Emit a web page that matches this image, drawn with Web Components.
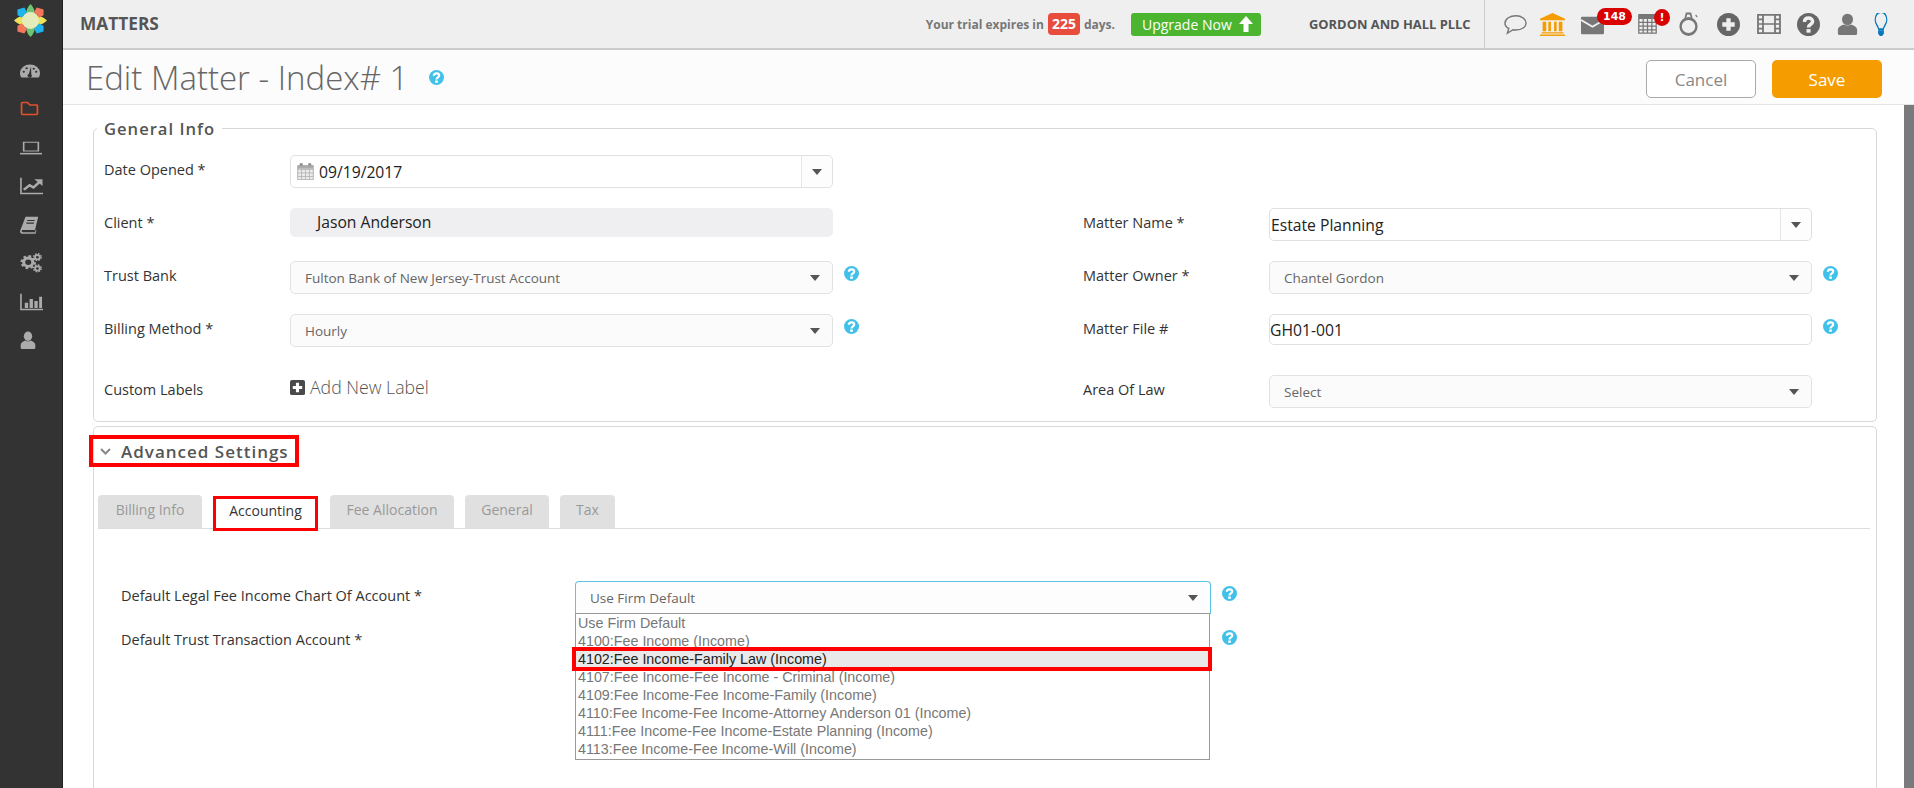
<!DOCTYPE html>
<html lang="en">
<head>
<meta charset="utf-8">
<title>Edit Matter</title>
<style>
  html, body { margin: 0; height: 100%; overflow: hidden; background: #fff; font-family: "Open Sans", "Liberation Sans", sans-serif; }
</style>
</head>
<body>
<app-shell>
  <side-nav slot="nav"></side-nav>
  <top-bar slot="top"></top-bar>
  <page-header slot="head" heading="Edit Matter - Index# 1"></page-header>
  <general-info slot="main"></general-info>
  <advanced-settings slot="main"></advanced-settings>
</app-shell>

<script>
// dibujos de los iconos, todos en una caja de 24x24
const ICONS = {
  gauge: `<path fill="currentColor" d="M12 2A12 12 0 0 0 0 14c0 2.400.6 4.400 1.600 6.500h20.800c1-2.100 1.600-4.100 1.600-6.500A12 12 0 0 0 12 2z"/><g fill="#333"><circle cx="4.500" cy="12.500" r="1.400"/><circle cx="8" cy="7.500" r="1.400"/><circle cx="16.500" cy="8" r="1.400"/><circle cx="19.500" cy="12.500" r="1.400"/><path d="M13.200 5l-2.600 10.500a2.600 2.600 0 1 0 3 .6z"/></g>`,
  folder: `<path fill="none" stroke="currentColor" stroke-width="2.200" stroke-linejoin="round" d="M2 4.500a1 1 0 0 1 1-1h6.500l3 3.500H21a1 1 0 0 1 1 1v11.500a1 1 0 0 1-1 1H3a1 1 0 0 1-1-1z"/>`,
  laptop: `<path fill="none" stroke="currentColor" stroke-width="1.800" d="M4 2h16v14H4z"/><path fill="currentColor" d="M0 19h24v2.500H0z"/>`,
  chart: `<path fill="none" stroke="currentColor" stroke-width="1.700" d="M1 1v21h23"/><path fill="none" stroke="currentColor" stroke-width="3" d="M4 17l6-6 4 3 7-8"/><path fill="currentColor" d="M15 3h8.500v9z"/>`,
  book: `<path fill="currentColor" d="M7 1h16l-4 17.500H3.500a1.500 1.500 0 0 0 0 3H19l.8-3 1 .2-1.200 4.800H3A3 3 0 0 1 .2 19.500z"/><path fill="none" stroke="#333" stroke-width="1.500" d="M9 6h9.500M8 9.500h9.500"/>`,
  gears: `<g fill="none" stroke="currentColor"><circle cx="9" cy="11" r="5" stroke-width="3.400"/><circle cx="9" cy="11" r="7.200" stroke-width="2.600" stroke-dasharray="3 2.650"/><circle cx="19" cy="5" r="2.500" stroke-width="1.900"/><circle cx="19" cy="5" r="4" stroke-width="1.800" stroke-dasharray="1.800 1.350"/><circle cx="19" cy="18.500" r="2.500" stroke-width="1.900"/><circle cx="19" cy="18.500" r="4" stroke-width="1.800" stroke-dasharray="1.800 1.350"/></g>`,
  bars: `<path fill="none" stroke="currentColor" stroke-width="1.700" d="M1 1v21h23"/><path fill="currentColor" d="M5 13h3.500v7H5zM10 8h3.500v12H10zM15 10.500h3.500V20H15zM20 5h3v15h-3z"/>`,
  user: `<circle fill="currentColor" cx="12" cy="7" r="6.300"/><path fill="currentColor" d="M1 22v-3.500c0-3 3.500-5 7-6 2.500 1.500 5.500 1.500 8 0 3.500 1 7 3 7 6V22a2 2 0 0 1-2 2H3a2 2 0 0 1-2-2z"/>`,
  chat: `<path fill="none" stroke="currentColor" stroke-width="1.500" d="M12.500 2C6.500 2 1 5.500 1 10.500c0 2.700 1.700 4.700 4 6l-1.500 5.500 6-4c1 .2 2 .3 3 .3 6 0 10.500-3.500 10.500-7.800S18.500 2 12.500 2z"/>`,
  bank: `<path fill="currentColor" d="M12 0l12 6v1.500H0V6zM2.500 9h3.500v10H2.500zM8 9h2.500v10H8zM13.500 9H16v10h-2.500zM18 9h3.500v10H18zM1.500 20h21v1.500h-21zM0 22.500h24V24H0z"/>`,
  mail: `<path fill="currentColor" d="M1 2h22a1 1 0 0 1 1 1v19a1 1 0 0 1-1 1H1a1 1 0 0 1-1-1V3a1 1 0 0 1 1-1z"/><path fill="none" stroke="#efefef" stroke-width="2.200" d="M0 6l12 8L24 6"/>`,
  calc: `<path fill="currentColor" d="M1 0h22v6H1z"/><path fill="none" stroke="currentColor" stroke-width="1.600" d="M1 1h22v22H1zM1 10h22M1 14.500h22M1 19h22M6.500 6v17M12 6v17M17.500 6v17"/>`,
  ring: `<ellipse fill="none" stroke="currentColor" stroke-width="3" cx="12" cy="14.500" rx="10" ry="8"/><path fill="none" stroke="currentColor" stroke-width="2.200" d="M8 6L9.500 1.500h5L16 6"/><path fill="none" stroke="currentColor" stroke-width="1.500" d="M21 3l2 2"/>`,
  plus: `<circle fill="currentColor" cx="12" cy="12" r="12"/><path fill="none" stroke="#efefef" stroke-width="4.500" d="M12 5.500v13M5.500 12h13"/>`,
  film: `<path fill="none" stroke="currentColor" stroke-width="1.800" d="M1 2h22v20H1zM6 2v20M18 2v20M1 7h5M1 12h5M1 17h5M18 7h5M18 12h5M18 17h5M6 12h12"/>`,
  help: `<circle fill="currentColor" cx="12" cy="12" r="12"/><path fill="none" stroke="#efefef" stroke-width="3.600" d="M7.800 9.300c0-2.600 1.900-4 4.300-4s4.200 1.400 4.200 3.600c0 3-4.300 2.800-4.300 6.200"/><path fill="#efefef" d="M9.900 16.800h4.300v3.700H9.900z"/>`,
  tip: `<circle fill="currentColor" cx="12" cy="12" r="12"/><path fill="none" stroke="#fff" stroke-width="3.600" d="M7.800 9.300c0-2.600 1.900-4 4.300-4s4.200 1.400 4.200 3.600c0 3-4.300 2.800-4.300 6.200"/><path fill="#fff" d="M9.900 16.800h4.300v3.700H9.900z"/>`,
  bulb: `<path fill="none" stroke="currentColor" stroke-width="2" d="M8 17c0-3-6-5-6-10a10 8 0 0 1 20 0c0 5-6 7-6 10z"/><path fill="currentColor" d="M7 18h10v3.500l-3 2.500h-4l-3-2.500z"/>`,
  date: `<path fill="#ececec" stroke="#9a9a9a" stroke-width="1" d="M1 3.500h22v20H1z"/><path fill="none" stroke="#a8a8a8" stroke-width="1" d="M1 9h22M1 14h22M1 19h22M6.500 9v14.500M12 9v14.500M17.500 9v14.500"/><path fill="#888" d="M4 .5h4v5H4zM16 .5h4v5h-4z"/><path fill="#aaa" d="M1 3.500h22V8H1z"/>`,
  addbox: `<rect fill="currentColor" width="24" height="24" rx="3"/><path fill="none" stroke="#fff" stroke-width="5" d="M12 4.500v15M4.500 12h15"/>`,
  logo: `<g transform="translate(12 12)">
    <path fill="#6fc46f" d="M0-12Q3.600-8.500 3-4H-3Q-3.600-8.500 0-12zM0 12Q3.600 8.500 3 4H-3Q-3.600 8.500 0 12z"/>
    <path fill="#efe25a" d="M-12 0Q-8.500-3.600-4-3V3Q-8.500 3.600-12 0zM12 0Q8.500-3.600 4-3V3Q8.500 3.600 12 0z"/>
    <path fill="#f4775a" d="M4.500-9.500l5 1.500 0 4-3 2-4-4zM-4.500 9.500l-5-1.500 0-4 3-2 4 4z"/>
    <path fill="#1fb4ee" d="M-4.500-9.500l-5 1.500 0 4 3 2 4-4zM4.500 9.500l5-1.500 0-4-3-2-4 4z"/>
    <circle r="6.200" fill="#e4ecbc"/></g>`
};

class UiIcon extends HTMLElement {
  constructor() {
    super();
    this.attachShadow({mode: "open"});
  }
  connectedCallback() {
    const w = this.getAttribute("w") || 20;
    const h = this.getAttribute("h") || w;
    this.shadowRoot.innerHTML = `
      <style>
        :host { display: inline-block; line-height: 0; flex: none; }
        svg { display: block; }
      </style>
      <svg width="${w}" height="${h}" viewBox="0 0 24 24" preserveAspectRatio="none">${ICONS[this.getAttribute("name")]}</svg>`;
  }
}
customElements.define("ui-icon", UiIcon);

// el signo de ayuda celeste que sale junto a los campos
class HelpTip extends HTMLElement {
  constructor() {
    super();
    this.attachShadow({mode: "open"});
    this.shadowRoot.innerHTML = `
      <style>
        :host { display: inline-block; line-height: 0; color: #41c1e9; flex: none; }
      </style>
      <ui-icon name="tip" w="15" h="15"></ui-icon>`;
  }
}
customElements.define("help-tip", HelpTip);

class AppShell extends HTMLElement {
  constructor() {
    super();
    this.attachShadow({mode: "open"});
    this.shadowRoot.innerHTML = `
      <style>
        :host { display: flex; height: 788px; overflow: hidden; }
        .col { flex: 1; min-width: 0; display: flex; flex-direction: column; }
        .body { flex: 1; min-height: 0; display: flex; }
        .scroll { flex: 1; min-width: 0; overflow: hidden; padding: 12px 27px 0 30px; }
        .thumb { width: 10px; background: #7a7a7c; }
      </style>
      <slot name="nav"></slot>
      <div class="col">
        <slot name="top"></slot>
        <slot name="head"></slot>
        <div class="body">
          <div class="scroll"><slot name="main"></slot></div>
          <div class="thumb"></div>
        </div>
      </div>`;
  }
}
customElements.define("app-shell", AppShell);

class SideNav extends HTMLElement {
  constructor() {
    super();
    this.attachShadow({mode: "open"});
    this.shadowRoot.innerHTML = `
      <style>
        :host { display: flex; flex-direction: column; width: 63px; flex: none; background: #333; border-right: 1px solid #222; box-sizing: border-box; color: #ababab; padding: 4px 0 0 20px; }
        .logo { margin: 0 0 26px -6px; }
        ui-icon { display: block; }
        .on { color: #e2502a; }
      </style>
      <ui-icon class="logo" name="logo" w="33"></ui-icon>
      <ui-icon name="gauge" w="20" h="17"></ui-icon>
      <ui-icon class="on" name="folder" w="19" h="17" style="margin-top:20px"></ui-icon>
      <ui-icon name="laptop" w="22" h="15" style="margin-top:24px"></ui-icon>
      <ui-icon name="chart" w="23" h="18" style="margin-top:21px"></ui-icon>
      <ui-icon name="book" w="19" h="18" style="margin-top:21px"></ui-icon>
      <ui-icon name="gears" w="22" h="20" style="margin-top:19px"></ui-icon>
      <ui-icon name="bars" w="23" h="18" style="margin-top:20px"></ui-icon>
      <ui-icon name="user" w="16" h="18" style="margin-top:20px"></ui-icon>`;
  }
}
customElements.define("side-nav", SideNav);

class TopBar extends HTMLElement {
  constructor() {
    super();
    this.attachShadow({mode: "open"});
    this.shadowRoot.innerHTML = `
      <style>
        :host { display: flex; align-items: center; height: 50px; flex: none; box-sizing: border-box; background: #efefef; border-bottom: 2px solid #ccc; padding-left: 17px; color: #666; }
        .name { font-size: 17.300px; font-weight: 700; color: #555; margin-right: auto; margin-top: -1px; }
        .trial { display: flex; align-items: center; font-size: 12px; font-weight: 700; color: #777; }
        .days { background: #e74c3c; color: #fff; font-weight: 700; font-size: 14px; border-radius: 4px; padding: 0 4px; height: 22px; line-height: 22px; margin: 0 4px; }
        .up { display: flex; align-items: center; justify-content: space-between; box-sizing: border-box; width: 130px; height: 23px; margin-left: 16px; padding: 0 8px 0 11px; background: #4cb530; color: #fff; font-size: 14px; border-radius: 3px; }
        .firm { font-size: 12.900px; font-weight: 700; color: #555; margin-left: 48px; width: 175px; white-space: nowrap; }
        .icons { display: flex; align-items: center; height: 48px; border-left: 1px solid #ccc; box-sizing: border-box; width: 430px; padding-left: 19px; }
        .badged { position: relative; display: block; }
        .badge { position: absolute; background: #d90000; color: #fff; font-family: "DejaVu Sans", sans-serif; font-weight: 700; font-size: 11px; line-height: 17px; height: 17px; text-align: center; }
        .count { left: 16px; top: -7px; width: 35px; border-radius: 9px; }
        .alert { left: 16px; top: -5px; width: 16px; border-radius: 50%; }
      </style>
      <div class="name">MATTERS</div>
      <div class="trial">Your trial expires in <span class="days">225</span> days.</div>
      <div class="up">Upgrade Now
        <svg width="14" height="16" viewBox="0 0 14 16"><path fill="#fff" d="M7 0l7 8H9.500v8h-5V8H0z"/></svg>
      </div>
      <div class="firm">GORDON AND HALL PLLC</div>
      <div class="icons">
        <ui-icon name="chat" w="23" h="21" style="color:#777"></ui-icon>
        <ui-icon name="bank" w="25" h="23" style="color:#f59d00;margin-left:13px"></ui-icon>
        <span class="badged" style="margin-left:16px;margin-top:1px">
          <ui-icon name="mail" w="23" h="20" style="color:#777;display:block"></ui-icon>
          <span class="badge count">148</span>
        </span>
        <span class="badged" style="margin-left:34px">
          <ui-icon name="calc" w="19" h="20" style="color:#777;display:block"></ui-icon>
          <span class="badge alert">!</span>
        </span>
        <ui-icon name="ring" w="19" h="24" style="color:#777;margin-left:22px"></ui-icon>
        <ui-icon name="plus" w="23" h="23" style="color:#666;margin-left:19px"></ui-icon>
        <ui-icon name="film" w="24" h="22" style="color:#777;margin-left:17px"></ui-icon>
        <ui-icon name="help" w="23" h="23" style="color:#666;margin-left:16px"></ui-icon>
        <ui-icon name="user" w="21" h="22" style="color:#777;margin-left:17px"></ui-icon>
        <ui-icon name="bulb" w="14" h="23" style="color:#0a78bf;margin-left:16px"></ui-icon>
      </div>`;
  }
}
customElements.define("top-bar", TopBar);

class PageHeader extends HTMLElement {
  constructor() {
    super();
    this.attachShadow({mode: "open"});
  }
  connectedCallback() {
    this.shadowRoot.innerHTML = `
      <style>
        :host { display: flex; align-items: center; height: 55px; flex: none; box-sizing: border-box; background: #fcfcfc; border-bottom: 1px solid #e4e4e4; padding: 4px 32px 0 23px; }
        h1 { margin: -3px 0 0; font-size: 33px; font-weight: 300; color: #666; }
        help-tip { margin: -3px auto 0 21px; }
        button { width: 110px; height: 38px; border-radius: 5px; font: 400 17px "Open Sans", sans-serif; box-sizing: border-box; }
        .cancel { background: #fff; border: 1px solid #aaa; color: #888; }
        .save { background: #f59d00; border: 0; color: #fff; margin-left: 16px; }
      </style>
      <h1>${this.getAttribute("heading")}</h1>
      <help-tip></help-tip>
      <button class="cancel">Cancel</button>
      <button class="save">Save</button>`;
  }
}
customElements.define("page-header", PageHeader);

// etiqueta + control + ayuda, una fila del formulario
class FormField extends HTMLElement {
  constructor() {
    super();
    this.attachShadow({mode: "open"});
  }
  connectedCallback() {
    const tip = this.hasAttribute("help") ? "<help-tip></help-tip>" : "";
    this.shadowRoot.innerHTML = `
      <style>
        :host { display: grid; grid-template-columns: var(--label-w, 186px) var(--control-w, 543px) auto; align-items: start; }
        label { font-size: 14.500px; line-height: 20px; padding-top: 5px; color: #333; }
        help-tip { margin: 5px 0 0 11px; }
      </style>
      <label>${this.getAttribute("label")}</label>
      <div><slot></slot></div>
      ${tip}`;
  }
}
customElements.define("form-field", FormField);

class SelectBox extends HTMLElement {
  constructor() {
    super();
    this.attachShadow({mode: "open"});
    this.shadowRoot.innerHTML = `
      <style>
        :host { display: flex; align-items: center; justify-content: space-between; box-sizing: border-box; height: 33px; background: #fbfbfb; border: 1px solid #e2e2e2; border-radius: 5px; padding: 1px 12px 0 14px; font-size: 13.500px; color: #666; }
        i { width: 0; height: 0; border: 5px solid transparent; border-top: 6px solid #555; border-bottom: 0; margin-top: -1px; }
      </style>
      <span><slot></slot></span><i></i>`;
  }
}
customElements.define("select-box", SelectBox);

// cajas con desplegable aparte (fecha, nombre del asunto) y el campo simple
class ComboBox extends HTMLElement {
  constructor() {
    super();
    this.attachShadow({mode: "open"});
    this.shadowRoot.innerHTML = `
      <style>
        :host { display: flex; align-items: stretch; box-sizing: border-box; height: 33px; background: #fff; border: 1px solid #e0e0e0; border-radius: 5px; font-size: 15.700px; color: #222; }
        .val { flex: 1; display: flex; align-items: center; gap: 5px; padding-left: var(--pad, 1px); }
        .btn { width: 30px; border-left: 1px solid #e6e6e6; display: flex; align-items: center; justify-content: center; background: #fdfdfd; border-radius: 0 5px 5px 0; }
        i { width: 0; height: 0; border: 5px solid transparent; border-top: 6px solid #555; border-bottom: 0; }
      </style>
      <div class="val"><slot></slot></div><div class="btn"><i></i></div>`;
  }
}
customElements.define("combo-box", ComboBox);

class GeneralInfo extends HTMLElement {
  constructor() {
    super();
    this.attachShadow({mode: "open"});
    this.shadowRoot.innerHTML = `
      <style>
        :host { display: block; }
        fieldset { margin: 0; padding: 15px 0 21px 10px; border: 1px solid #d8d8d8; border-radius: 5px; }
        legend { margin-left: -7px; padding: 0 7px; font-size: 16.600px; font-weight: 600; letter-spacing: 1px; color: #555; }
        .grid { display: grid; grid-template-columns: 979px 1fr; grid-auto-rows: 33px; row-gap: 20px; }
        .last { margin-top: 8px; }
        .client { box-sizing: border-box; height: 29px; background: #efeff1; border-radius: 5px; padding-left: 27px; font-size: 15.700px; line-height: 29px; color: #222; }
        .text { box-sizing: border-box; height: 31px; background: #fff; border: 1px solid #e0e0e0; border-radius: 5px; font-size: 15.700px; line-height: 31px; color: #222; }
        .add { display: flex; align-items: center; gap: 5px; font-size: 17.700px; font-weight: 300; color: #555; height: 24px; }
        .add ui-icon { color: #4a4a4a; }
        .date { --pad: 6px; }
      </style>
      <fieldset>
        <legend>General Info</legend>
        <div class="grid">
          <form-field label="Date Opened *">
            <combo-box class="date"><ui-icon name="date" w="17" h="17"></ui-icon>09/19/2017</combo-box>
          </form-field>
          <div></div>
          <form-field label="Client *"><div class="client">Jason Anderson</div></form-field>
          <form-field label="Matter Name *"><combo-box>Estate Planning</combo-box></form-field>
          <form-field label="Trust Bank" help><select-box>Fulton Bank of New Jersey-Trust Account</select-box></form-field>
          <form-field label="Matter Owner *" help><select-box>Chantel Gordon</select-box></form-field>
          <form-field label="Billing Method *" help><select-box>Hourly</select-box></form-field>
          <form-field label="Matter File #" help><div class="text">GH01-001</div></form-field>
          <form-field class="last" label="Custom Labels"><div class="add"><ui-icon name="addbox" w="15" h="15"></ui-icon>Add New Label</div></form-field>
          <form-field class="last" label="Area Of Law"><select-box>Select</select-box></form-field>
        </div>
      </fieldset>`;
  }
}
customElements.define("general-info", GeneralInfo);

class TabStrip extends HTMLElement {
  constructor() {
    super();
    this.attachShadow({mode: "open"});
    this.shadowRoot.innerHTML = `
      <style>
        :host { display: flex; margin: 28px 6px 0 4px; border-bottom: 1px solid #ddd; height: 34px; box-sizing: border-box; font-size: 14px; }
        div { box-sizing: border-box; height: 33px; background: #e0e0e0; color: #999; border-radius: 4px 4px 0 0; line-height: 29px; text-align: center; margin-right: 11px; }
        .on { width: 105px; height: 35px; margin: 1px 12px 0 0; background: #fff; color: #333; border: 3px solid #f00; border-radius: 0; line-height: 24px; }
      </style>
      <div style="width:104px">Billing Info</div>
      <div class="on">Accounting</div>
      <div style="width:124px">Fee Allocation</div>
      <div style="width:84px">General</div>
      <div style="width:55px">Tax</div>`;
  }
}
customElements.define("tab-strip", TabStrip);

// lista abierta sobre el formulario, va encima de la segunda fila
class AccountPicker extends HTMLElement {
  constructor() {
    super();
    this.attachShadow({mode: "open"});
    this.shadowRoot.innerHTML = `
      <style>
        :host { display: block; position: relative; }
        .box { display: flex; align-items: center; justify-content: space-between; box-sizing: border-box; height: 33px; background: #fdfdfd; border: 1px solid #5ec4e4; border-bottom-color: #999; border-radius: 4px 4px 0 0; padding: 0 12px 0 14px; font-size: 13.500px; color: #666; }
        i { width: 0; height: 0; border: 5px solid transparent; border-top: 6px solid #555; border-bottom: 0; }
        ul { position: absolute; left: 0; right: 1px; top: 32px; z-index: 2; list-style: none; margin: 0; padding: 0; box-sizing: border-box; height: 147px; background: #fff; border: 1px solid #999; font: 14.300px/18px "Liberation Sans", Arial, sans-serif; color: #777; }
        li { padding-left: 2px; height: 18px; white-space: nowrap; }
        .hit { position: relative; background: #e9e9e9; color: #222; outline: 4px solid #f00; outline-offset: -1px; margin-left: -1px; padding-left: 3px; }
      </style>
      <div class="box"><span>Use Firm Default</span><i></i></div>
      <ul>
        <li>Use Firm Default</li>
        <li>4100:Fee Income (Income)</li>
        <li class="hit">4102:Fee Income-Family Law (Income)</li>
        <li>4107:Fee Income-Fee Income - Criminal (Income)</li>
        <li>4109:Fee Income-Fee Income-Family (Income)</li>
        <li>4110:Fee Income-Fee Income-Attorney Anderson 01 (Income)</li>
        <li>4111:Fee Income-Fee Income-Estate Planning (Income)</li>
        <li>4113:Fee Income-Fee Income-Will (Income)</li>
      </ul>`;
  }
}
customElements.define("account-picker", AccountPicker);

class AdvancedSettings extends HTMLElement {
  constructor() {
    super();
    this.attachShadow({mode: "open"});
    this.shadowRoot.innerHTML = `
      <style>
        :host { display: block; box-sizing: border-box; height: 480px; margin-top: 4px; border: 1px solid #d8d8d8; border-radius: 5px; padding-top: 8px; }
        .head { display: inline-flex; align-items: center; box-sizing: border-box; height: 32px; width: 210px; margin-left: -5px; border: 4px solid #f00; padding-left: 7px; gap: 10px; font-size: 17px; font-weight: 600; letter-spacing: 1px; color: #555; vertical-align: top; }
        .rows { padding: 52px 0 0 27px; --label-w: 454px; --control-w: 636px; display: grid; grid-auto-rows: 44px; }
      </style>
      <div class="head">
        <svg width="11" height="7" viewBox="0 0 11 7"><path fill="none" stroke="#888" stroke-width="2" d="M1 1l4.500 4.500L10 1"/></svg>
        Advanced Settings
      </div>
      <tab-strip></tab-strip>
      <div class="rows">
        <form-field label="Default Legal Fee Income Chart Of Account *" help><account-picker></account-picker></form-field>
        <form-field label="Default Trust Transaction Account *" help></form-field>
      </div>`;
  }
}
customElements.define("advanced-settings", AdvancedSettings);
</script>
</body>
</html>
